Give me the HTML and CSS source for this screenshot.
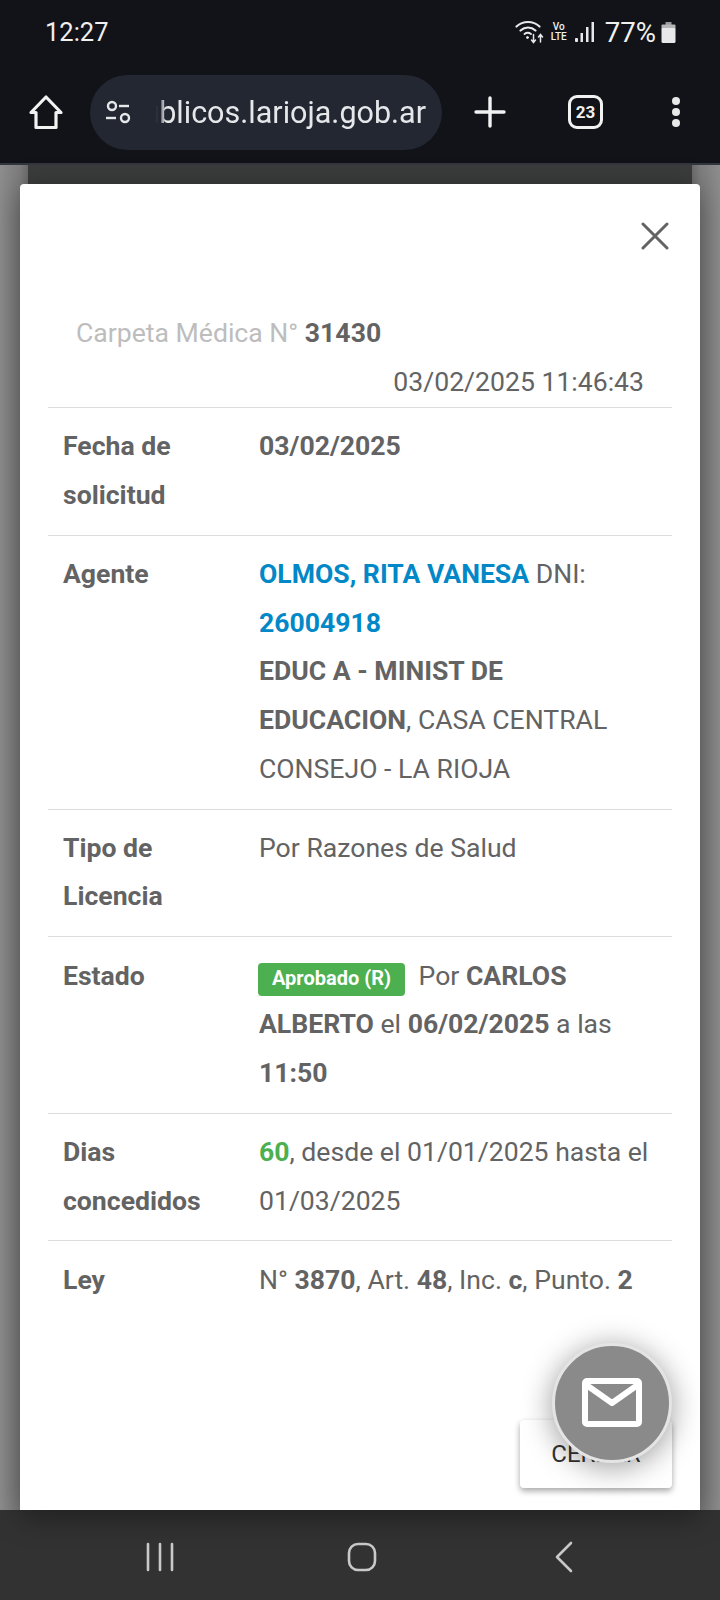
FILE: index.html
```html
<!DOCTYPE html>
<html lang="en">
<head>
    <meta charset="UTF-8" />
    <meta name="viewport" content="width=device-width, initial-scale=1.0" />
    <title>Carpeta Médica</title>
    <link rel="stylesheet" href="styles.css">
</head>
<body>

<div class="phone">
    <header class="browser-top">
        <div class="status-bar">
            <span class="clock">12:27</span>
            <div class="status-icons">
                <svg class="wifi" width="30" height="26" viewBox="0 0 30 26" fill="none" stroke="#e8e8ea" stroke-linecap="round">
                    <path d="M1.5 7.5C8 1.500 18 1.500 24.500 7.500" stroke-width="2.200"/>
                    <path d="M5.500 11.500C10 7.500 16 7.500 20.500 11.500" stroke-width="2.200"/>
                    <path d="M9.500 15C11.500 13.500 14 13.500 16 15" stroke-width="2"/>
                    <circle cx="12.500" cy="18.500" r="1" fill="#e8e8ea" stroke-width="1"/>
                    <path d="M18.500 15.500V23M16.500 21L18.500 23.500L20.500 21" stroke-width="1.500"/>
                    <path d="M25.500 23V16M23.500 18L25.500 15.500L27.500 18" stroke-width="1.500"/>
                </svg>
                <span class="volte">Vo<br>LTE</span>
                <svg width="20" height="22" viewBox="0 0 20 22" fill="#e8e8ea">
                    <rect x="0" y="17" width="3" height="4" rx="1"/>
                    <rect x="5.500" y="12" width="2.500" height="9"/>
                    <rect x="11" y="6" width="2.500" height="15"/>
                    <rect x="16.500" y="1" width="2.500" height="20"/>
                </svg>
                <span class="battery-text">77%</span>
                <svg width="15" height="21" viewBox="0 0 15 21" fill="#e8e8ea">
                    <rect x="4.500" y="0" width="6" height="3" fill="#9a9a9c"/>
                    <rect x="0.500" y="2.500" width="14" height="5" rx="1" fill="#b5b5b7"/>
                    <rect x="0.500" y="6" width="14" height="15" rx="1.500"/>
                </svg>
            </div>
        </div>
        <div class="toolbar">
            <svg class="tool-home" width="36" height="36" viewBox="0 0 36 36" fill="none" stroke="#f2f2f2" stroke-width="3.200" stroke-linejoin="round">
                <path d="M18 3L33 18.500H28V33.500H8V18.500H3Z"/>
            </svg>
            <div class="url-pill">
                <svg width="30" height="26" viewBox="0 0 30 26" fill="none" stroke="#e6e7ea" stroke-width="2.400">
                    <circle cx="8" cy="7" r="4"/>
                    <path d="M15 7H25"/>
                    <path d="M2 19H12"/>
                    <circle cx="21" cy="19" r="4"/>
                </svg>
                <div class="url-text">públicos.larioja.gob.ar</div>
            </div>
            <svg class="tool-plus" width="32" height="32" viewBox="0 0 32 32" stroke="#f2f2f2" stroke-width="3.400" stroke-linecap="round">
                <path d="M16 2V30M2 16H30"/>
            </svg>
            <div class="tab-count">23</div>
            <div class="tool-dots"><i></i><i></i><i></i></div>
        </div>
    </header>

    <main class="page-behind">
        <div class="page-sheet"></div>
        <section class="modal">
            <div class="modal-close">
                <svg width="28" height="28" viewBox="0 0 28 28" stroke="#636363" stroke-width="3" stroke-linecap="round">
                    <path d="M2 2L26 26M26 2L2 26"/>
                </svg>
            </div>
            <div class="modal-title">Carpeta Médica N° <b>31430</b></div>
            <div class="modal-date">03/02/2025 11:46:43</div>

            <div class="row">
                <div class="row-label">Fecha de solicitud</div>
                <div class="row-value"><b>03/02/2025</b></div>
            </div>
            <div class="row">
                <div class="row-label">Agente</div>
                <div class="row-value"><b class="blue">OLMOS, RITA VANESA</b> DNI: <b class="blue">26004918</b><br><b>EDUC A - MINIST DE EDUCACION</b>, CASA CENTRAL CONSEJO - LA RIOJA</div>
            </div>
            <div class="row">
                <div class="row-label">Tipo de Licencia</div>
                <div class="row-value">Por Razones de Salud</div>
            </div>
            <div class="row">
                <div class="row-label">Estado</div>
                <div class="row-value"><span class="badge">Aprobado (R)</span> Por <b>CARLOS ALBERTO</b> el <b>06/02/2025</b> a las <b>11:50</b></div>
            </div>
            <div class="row">
                <div class="row-label">Dias concedidos</div>
                <div class="row-value"><b class="green">60</b>, desde el 01/01/2025 hasta el 01/03/2025</div>
            </div>
            <div class="row">
                <div class="row-label">Ley</div>
                <div class="row-value">N° <b>3870</b>, Art. <b>48</b>, Inc. <b>c</b>, Punto. <b>2</b></div>
            </div>

            <div class="modal-footer">
                <button class="btn-close" type="button">CERRAR</button>
            </div>
        </section>
        <div class="fab">
            <svg width="60" height="50" viewBox="0 0 60 50" fill="none" stroke="#fff" stroke-width="6" stroke-linejoin="round">
                <rect x="3" y="3" width="54" height="43" rx="2"/>
                <path d="M3 6L30 25L57 6"/>
            </svg>
        </div>
    </main>

    <nav class="nav-bar">
        <svg width="30" height="30" viewBox="0 0 30 30" stroke="#c9c9c9" stroke-width="2.600" stroke-linecap="round">
            <path d="M3 2V28M15 2V28M27 2V28"/>
        </svg>
        <svg width="30" height="30" viewBox="0 0 30 30" fill="none" stroke="#c9c9c9" stroke-width="2.600">
            <rect x="2" y="2" width="26" height="26" rx="9"/>
        </svg>
        <svg class="nav-back" width="20" height="32" viewBox="0 0 20 32" fill="none" stroke="#c9c9c9" stroke-width="2.600" stroke-linecap="round" stroke-linejoin="round">
            <path d="M17 2L3 16L17 30"/>
        </svg>
    </nav>
</div>

</body>
</html>
```

FILE: styles.css
```css
* {
    box-sizing: border-box;
}

body {
    margin: 0;
    font-family: Roboto, "Liberation Sans", sans-serif;
    background-color: #111318;
}

.phone {
    width: 720px;
    height: 1600px;
    display: flex;
    flex-direction: column;
    overflow: hidden;
}

/* browser chrome */
.browser-top {
    height: 165px;
    background-color: #111318;
    color: #f0f0f0;
    border-bottom: 2px solid #34363f;
}

.status-bar {
    height: 62px;
    padding: 2px 44px 0 45px;
    display: flex;
    justify-content: space-between;
    align-items: center;
}

.clock {
    font-size: 25.500px;
}

.status-icons {
    display: flex;
    align-items: center;
}

.wifi {
    margin-right: 6px;
}

.volte {
    font-size: 10px;
    line-height: 10px;
    font-weight: 500;
    text-align: center;
    margin-right: 8px;
}

.battery-text {
    font-size: 27.600px;
    margin: 0 5px 0 10px;
}

.toolbar {
    height: 100px;
    display: flex;
    align-items: center;
    padding: 0 0 0 28px;
}

.url-pill {
    width: 352px;
    height: 75px;
    margin-left: 26px;
    padding-left: 14px;
    background-color: #232731;
    border-radius: 38px;
    display: flex;
    align-items: center;
}

.url-text {
    width: 272px;
    margin-left: 20px;
    font-size: 30.500px;
    color: #e6e7ea;
    white-space: nowrap;
    overflow: hidden;
    direction: rtl;
    text-align: left;
    -webkit-mask-image: linear-gradient(90deg, transparent 0, transparent 2px, #000 12px);
    mask-image: linear-gradient(90deg, transparent 0, transparent 2px, #000 12px);
}

.tool-plus {
    margin-left: 32px;
}

.tab-count {
    width: 35px;
    height: 34px;
    margin-left: 62px;
    border: 3px solid #f2f2f2;
    border-radius: 9px;
    font-size: 17px;
    font-weight: 700;
    line-height: 28px;
    text-align: center;
}

.tool-dots {
    margin-left: 69px;
    display: flex;
    flex-direction: column;
    gap: 3px;
}

.tool-dots i {
    width: 8px;
    height: 8px;
    border-radius: 50%;
    background-color: #e8e8e8;
}

/* dimmed page and modal */
.page-behind {
    position: relative;
    height: 1345px;
    padding: 19px 20px 0;
    background: linear-gradient(90deg, #8d8d8d 0, #7d7d7d 20px, #6c6c6c 28px, #6c6c6c 692px, #7d7d7d 700px, #8d8d8d 720px);
}

.page-sheet {
    position: absolute;
    top: 0;
    left: 28px;
    width: 664px;
    height: 30px;
    background-color: #3b3c3c;
}

.modal {
    position: relative;
    height: 1326px;
    padding: 0 28px;
    background-color: #fff;
    border-radius: 4px 4px 0 0;
    color: #636363;
    font-size: 26.600px;
    line-height: 48.600px;
    box-shadow: 0 6px 30px rgba(0, 0, 0, 0.4);
}

.modal b {
    font-weight: 700;
}

.modal-close {
    height: 125px;
    padding: 21px 3px 0 0;
    display: flex;
    justify-content: flex-end;
    align-items: flex-start;
}

.modal-close svg {
    margin-top: 17px;
}

.modal-title {
    padding-left: 28px;
    color: #bdbdbd;
}

.modal-title b {
    color: #636363;
}

.modal-date {
    padding: 0 28px 1px 0;
    text-align: right;
}

.row {
    display: grid;
    grid-template-columns: 196px 1fr;
    padding: 14.300px 16px 15.300px 15px;
    border-top: 1px solid #dcdcdc;
}

.row-label {
    font-weight: 700;
    padding-right: 30px;
}

.blue {
    color: #0288c7;
}

.green {
    color: #4caf50;
}

.badge {
    display: inline-block;
    height: 33px;
    padding: 0 14px;
    margin: 0 7px 0 -1px;
    background-color: #4caf50;
    color: #fff;
    border-radius: 4px;
    font-size: 20px;
    font-weight: 700;
    line-height: 31px;
    vertical-align: 0;
}

.modal-footer {
    position: absolute;
    right: 28px;
    bottom: 22px;
}

.btn-close {
    width: 152px;
    height: 68px;
    background-color: #fff;
    border: none;
    border-radius: 4px;
    color: #333;
    font-family: Roboto, "Liberation Sans", sans-serif;
    font-size: 24px;
    box-shadow: 0 3px 6px rgba(0, 0, 0, 0.35);
}

.fab {
    position: absolute;
    left: 552px;
    top: 1178px;
    width: 120px;
    height: 120px;
    background-color: #8a8a8a;
    border: 3px solid #e4e4e4;
    border-radius: 50%;
    display: flex;
    justify-content: center;
    align-items: center;
    box-shadow: 0 4px 30px rgba(0, 0, 0, 0.4);
}

/* android buttons */
.nav-bar {
    flex: 1;
    background-color: #323232;
    display: flex;
    align-items: center;
    padding: 4px 0 0 145px;
    gap: 172px;
}

.nav-back {
    margin-left: 5px;
}
```
